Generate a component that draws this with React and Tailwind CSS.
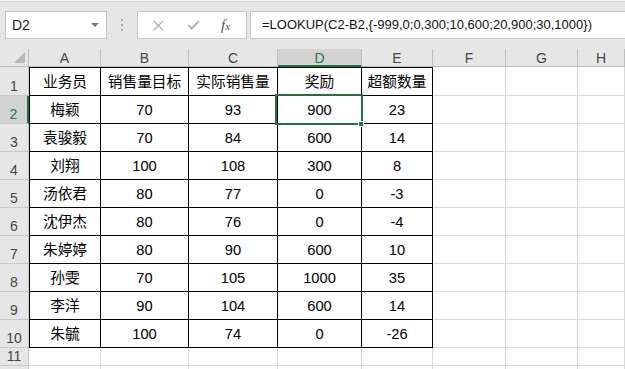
import React from 'react'

const font = { fontFamily: '"Liberation Sans", "Noto Sans CJK SC", sans-serif' }

const cols = ['A', 'B', 'C', 'D', 'E', 'F', 'G', 'H']

const rows = [
  ['业务员', '销售量目标', '实际销售量', '奖励', '超额数量'],
  ['梅颖', '70', '93', '900', '23'],
  ['袁骏毅', '70', '84', '600', '14'],
  ['刘翔', '100', '108', '300', '8'],
  ['汤依君', '80', '77', '0', '-3'],
  ['沈伊杰', '80', '76', '0', '-4'],
  ['朱婷婷', '80', '90', '600', '10'],
  ['孙雯', '70', '105', '1000', '35'],
  ['李洋', '90', '104', '600', '14'],
  ['朱毓', '100', '74', '0', '-26'],
]

function FormulaBar() {
  return (
    <div className="h-[49px] bg-[#e6e6e6] flex flex-col">
      <div className="h-px bg-[#f7f7f7]" />
      <div className="h-px bg-[#d6d6d6]" />
      <div className="flex items-start pt-[9px] pl-[5px]">
        {/* name box */}
        <div className="w-[102px] h-[28px] bg-white border border-[#c6c6c6] flex items-center justify-between pl-[6px] pr-[7px] text-[14px] text-[#222]">
          <span className="leading-none">D2</span>
          <span className="w-0 h-0 border-l-[4px] border-r-[4px] border-t-[4px] border-l-transparent border-r-transparent border-t-[#7a7a7a]" />
        </div>
        {/* grip dots */}
        <div className="w-[30px] h-[28px] flex flex-col items-center justify-center gap-[3px]">
          <span className="w-[2px] h-[2px] bg-[#a6a6a6]" />
          <span className="w-[2px] h-[2px] bg-[#a6a6a6]" />
          <span className="w-[2px] h-[2px] bg-[#a6a6a6]" />
        </div>
        {/* buttons */}
        <div className="w-[110px] h-[28px] bg-white border border-[#c6c6c6] flex items-center">
          <svg className="ml-[15px]" width="11" height="11" viewBox="0 0 11 11">
            <path d="M1 1 L10 10 M10 1 L1 10" stroke="#b3b3b3" strokeWidth="1.4" />
          </svg>
          <svg className="ml-[23px]" width="13" height="10" viewBox="0 0 13 10">
            <path d="M1 5 L4.5 8.5 L12 1" stroke="#b3b3b3" strokeWidth="2" fill="none" />
          </svg>
          <span
            className="ml-[21px] text-[15px] italic text-[#555] leading-none"
            style={{ fontFamily: '"Liberation Serif", serif' }}
          >
            f<span className="text-[11px]">x</span>
          </span>
        </div>
        {/* formula */}
        <div className="ml-[3px] flex-1 h-[28px] bg-white border border-[#c6c6c6] border-r-0 flex items-center pl-[11px] text-[13px] text-[#111] whitespace-nowrap">
          =LOOKUP(C2-B2,{'{'}-999,0;0,300;10,600;20,900;30,1000{'}'})
        </div>
      </div>
    </div>
  )
}

export default function App() {
  const dataRows = rows.length
  return (
    <div className="w-[625px] h-[369px] overflow-hidden bg-white" style={font}>
      <FormulaBar />
      <div
        className="relative grid"
        style={{
          gridTemplateColumns: '29px 72px 88px 89px 84px 71px 73px 72px 1fr',
          gridTemplateRows: '18px 29px repeat(9, 28px) 18px 18px',
        }}
      >
        {/* header row */}
        <div className="bg-[#e6e6e6] border-r border-b border-[#bdbdbd] relative">
          <svg className="absolute right-[3px] bottom-[3px]" width="11" height="11" viewBox="0 0 11 11">
            <path d="M11 0 L11 11 L0 11 Z" fill="#b8b8b8" />
          </svg>
        </div>
        {cols.map((c) =>
          c === 'D' ? (
            <div key={c} className="bg-[#d2d2d2] border-r border-[#bdbdbd] border-b-2 border-b-[#217346] flex items-center justify-center pt-[1px] text-[14px] text-[#217346] leading-none">
              {c}
            </div>
          ) : (
            <div key={c} className="bg-[#e6e6e6] border-r border-b border-[#bdbdbd] flex items-center justify-center pt-[1px] text-[14px] text-[#444] leading-none">
              {c}
            </div>
          )
        )}

        {/* body rows */}
        {[...Array(12)].map((_, r) => {
          const inTable = r < dataRows
          const cells = inTable ? rows[r] : []
          const selected = r === 1
          return (
            <React.Fragment key={r}>
              <div
                className={
                  selected
                    ? 'bg-[#d2d2d2] border-r-2 border-r-[#217346] border-b border-b-[#c8c8c8] flex items-end justify-center pb-[2px] text-[14px] text-[#217346] leading-none'
                    : 'bg-[#e6e6e6] border-r border-b border-[#c8c8c8] flex items-end justify-center pb-[2px] text-[14px] text-[#444] leading-none'
                }
              >
                {r < 11 ? r + 1 : ''}
              </div>
              {cols.map((c, ci) => {
                const isCell = inTable && ci < 5
                if (!isCell) {
                  return <div key={c} className="border-r border-b border-[#d9d9d9]" />
                }
                return (
                  <div
                    key={c}
                    className={`border-r border-b border-black flex items-center justify-center pt-[2px] text-[14.7px] text-black leading-none ${ci === 0 ? 'border-l' : ''} ${r === 0 ? 'border-t' : ''}`}
                  >
                    {cells[ci]}
                  </div>
                )
              })}
            </React.Fragment>
          )
        })}

        {/* active cell overlay */}
        <div className="absolute left-[275px] top-[45px] w-[88px] h-[31px] border-2 border-[#217346] pointer-events-none" />
        <div className="absolute left-[358px] top-[72px] w-[6px] h-[6px] bg-[#217346] border border-white pointer-events-none" />
      </div>
    </div>
  )
}
